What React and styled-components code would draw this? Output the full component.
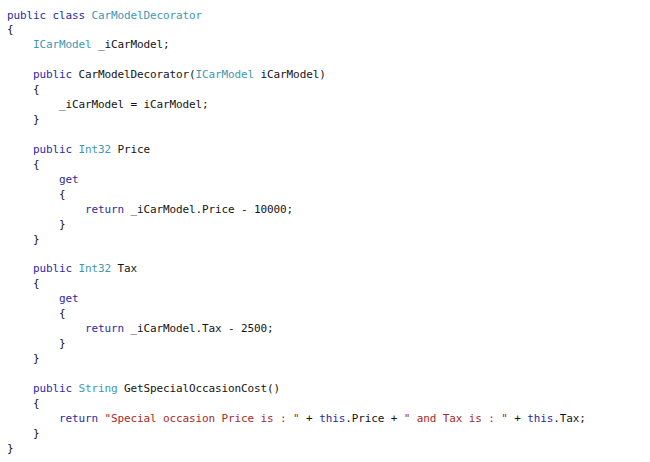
// NPM
import React from "react";
import styled, { createGlobalStyle } from "styled-components";

const GlobalStyle = createGlobalStyle`
  html, body {
    margin: 0;
    padding: 0;
    background: #ffffff;
  }
`;

const COLORS = {
  kw: "#2b2ba3",
  type: "#3f97b1",
  str: "#a52a2a",
  plain: "#141414",
};

const Editor = styled.div`
  width: 650px;
  height: 462px;
  box-sizing: border-box;
  padding: 8.5px 0 0 7px;
  background: #ffffff;
  font-family: "DejaVu Sans Mono", "Liberation Mono", monospace;
  font-size: 11px;
  letter-spacing: -0.12px;
  overflow: hidden;
`;

const Line = styled.div`
  height: 14.95px;
  line-height: 14.95px;
  white-space: pre;
  color: ${COLORS.plain};
  padding-left: ${(p) => p.$indent * 26}px;
`;

const Token = styled.span`
  color: ${(p) => COLORS[p.$kind] || COLORS.plain};
`;

// each line: [indent, tokens]; token = string (plain) or [kind, text]
const CODE = [
  [0, [["kw", "public"], " ", ["kw", "class"], " ", ["type", "CarModelDecorator"]]],
  [0, ["{"]],
  [1, [["type", "ICarModel"], " _iCarModel;"]],
  [0, []],
  [1, [["kw", "public"], " CarModelDecorator(", ["type", "ICarModel"], " iCarModel)"]],
  [1, ["{"]],
  [2, ["_iCarModel = iCarModel;"]],
  [1, ["}"]],
  [0, []],
  [1, [["kw", "public"], " ", ["type", "Int32"], " Price"]],
  [1, ["{"]],
  [2, [["kw", "get"]]],
  [2, ["{"]],
  [3, [["kw", "return"], " _iCarModel.Price - 10000;"]],
  [2, ["}"]],
  [1, ["}"]],
  [0, []],
  [1, [["kw", "public"], " ", ["type", "Int32"], " Tax"]],
  [1, ["{"]],
  [2, [["kw", "get"]]],
  [2, ["{"]],
  [3, [["kw", "return"], " _iCarModel.Tax - 2500;"]],
  [2, ["}"]],
  [1, ["}"]],
  [0, []],
  [1, [["kw", "public"], " ", ["type", "String"], " GetSpecialOccasionCost()"]],
  [1, ["{"]],
  [
    2,
    [
      ["kw", "return"],
      " ",
      ["str", '"Special occasion Price is : "'],
      " + ",
      ["kw", "this"],
      ".Price + ",
      ["str", '" and Tax is : "'],
      " + ",
      ["kw", "this"],
      ".Tax;",
    ],
  ],
  [1, ["}"]],
  [0, ["}"]],
];

// MODULE
export default function App() {
  return (
    <>
      <GlobalStyle />
      <Editor>
        {CODE.map(([indent, tokens], i) => (
          <Line key={i} $indent={indent}>
            {tokens.length === 0
              ? " "
              : tokens.map((t, j) =>
                  typeof t === "string" ? (
                    <Token key={j}>{t}</Token>
                  ) : (
                    <Token key={j} $kind={t[0]}>
                      {t[1]}
                    </Token>
                  )
                )}
          </Line>
        ))}
      </Editor>
    </>
  );
}
